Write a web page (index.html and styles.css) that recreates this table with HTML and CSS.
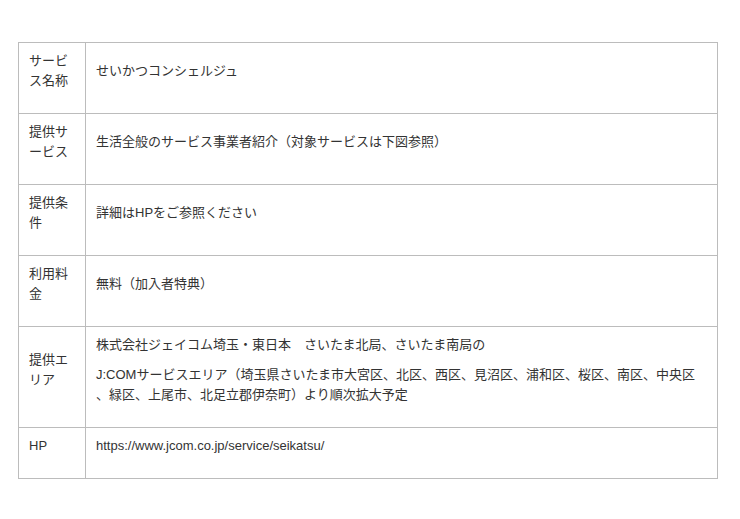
FILE: index.html
```html
<!DOCTYPE html>
<html lang="ja">
<head>
    <meta charset="UTF-8">
    <meta name="viewport" content="width=device-width, initial-scale=1.0">
    <title>せいかつコンシェルジュ</title>
    <link rel="stylesheet" href="styles.css">
</head>
<body>

    <div class="wrap">
        <table class="info">
            <colgroup>
                <col class="col-label">
                <col>
            </colgroup>
            <tr>
                <td><p>サービス名称</p></td>
                <td><p>せいかつコンシェルジュ</p></td>
            </tr>
            <tr>
                <td><p>提供サービス</p></td>
                <td><p>生活全般のサービス事業者紹介（対象サービスは下図参照）</p></td>
            </tr>
            <tr>
                <td><p>提供条件</p></td>
                <td><p>詳細はHPをご参照ください</p></td>
            </tr>
            <tr>
                <td><p>利用料金</p></td>
                <td><p>無料（加入者特典）</p></td>
            </tr>
            <tr>
                <td><p>提供エリア</p></td>
                <td>
                    <p>株式会社ジェイコム埼玉・東日本　さいたま北局、さいたま南局の</p>
                    <p>J:COMサービスエリア（埼玉県さいたま市大宮区、北区、西区、見沼区、浦和区、桜区、南区、中央区<br>、緑区、上尾市、北足立郡伊奈町）より順次拡大予定</p>
                </td>
            </tr>
            <tr>
                <td><p>HP</p></td>
                <td><p>https://www.jcom.co.jp/service/seikatsu/</p></td>
            </tr>
        </table>
    </div>

</body>
</html>
```

FILE: styles.css
```css
body {
    margin: 0;
    background-color: #fff;
    color: #333;
    font-family: "Liberation Sans", "Noto Sans CJK JP", sans-serif;
    font-size: 13px;
    line-height: 20px;
}
.wrap {
    padding: 42px 0 0 18px;
}
.info {
    width: 700px;
    border-collapse: collapse;
    table-layout: fixed;
}
.info .col-label {
    width: 67px;
}
.info td {
    border: 1px solid #bcbcbc;
    padding: 8px 10px 12px;
    vertical-align: middle;
    word-break: break-all;
}
.info p {
    margin: 0 0 10px;
}
```
